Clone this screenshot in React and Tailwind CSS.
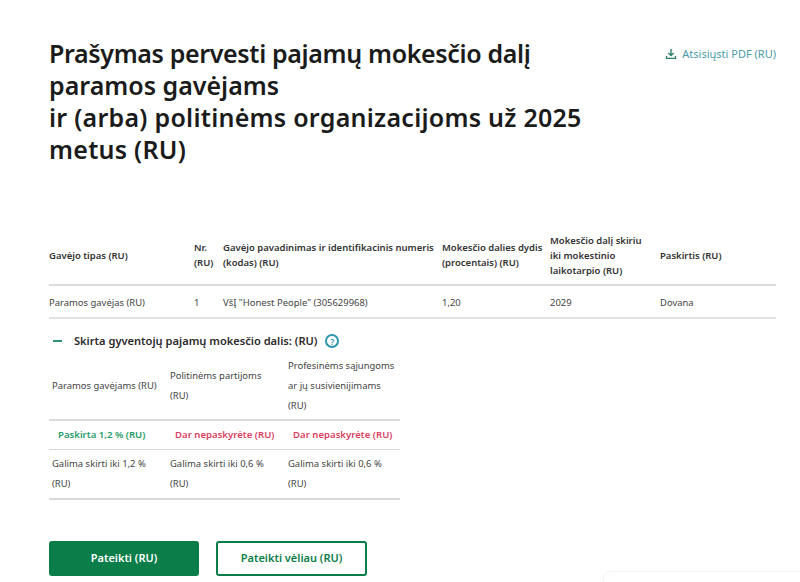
import React from "react";

const head = "text-left align-middle font-semibold text-[9.5px] leading-[15px] text-[#333] p-0 pb-[3px]";
const cell = "text-left align-middle font-normal text-[9.45px] text-[#444] p-0 pt-[3px]";
const sub = "text-left align-middle font-normal text-[9.45px] leading-[20px] text-[#444] p-0 pl-[3px]";

function DownloadIcon() {
  return (
    <svg width="12" height="12" viewBox="0 0 12 12" fill="none" stroke="#2f7f6b" strokeWidth="1.4">
      <path d="M6 1v6.2M3.4 4.9 6 7.5l2.6-2.6" />
      <path d="M1.5 8v2.4h9V8" />
    </svg>
  );
}

export default function App() {
  return (
    <div className="w-[800px] h-[582px] overflow-hidden bg-white font-['Noto_Sans','Open_Sans',sans-serif] relative">
      <div className="pl-[49px] pr-[24px] pt-[37px] flex justify-between items-start">
        <h1 className="w-[560px] text-[25px] leading-[32px] font-semibold text-[#1b1b1b]">
          <span className="tracking-[-0.35px]">Prašymas pervesti pajamų mokesčio dalį</span>
          <br />
          paramos gavėjams
          <br />
          <span className="tracking-[0.26px]">ir (arba) politinėms organizacijoms už 2025 metus (RU)</span>
        </h1>
        <a className="mt-[10px] flex items-center gap-[5px] text-[11px] leading-[14px] text-[#4b9aa8]">
          <DownloadIcon />
          Atsisiųsti PDF (RU)
        </a>
      </div>

      <div className="pl-[49px] pr-[24px] mt-[64px]">
        <table className="w-[727px] table-fixed border-collapse">
          <colgroup>
            <col className="w-[145px]" />
            <col className="w-[29px]" />
            <col className="w-[219px]" />
            <col className="w-[108px]" />
            <col className="w-[110px]" />
            <col className="w-[116px]" />
          </colgroup>
          <thead>
            <tr className="h-[56px] border-b-2 border-[#dcdcdc]">
              <th className={head}>Gavėjo tipas (RU)</th>
              <th className={head}>Nr.<br />(RU)</th>
              <th className={head}>Gavėjo pavadinimas ir identifikacinis numeris<br />(kodas) (RU)</th>
              <th className={head}>Mokesčio dalies dydis<br />(procentais) (RU)</th>
              <th className={head}>Mokesčio dalį skiriu<br />iki mokestinio<br />laikotarpio (RU)</th>
              <th className={head}>Paskirtis (RU)</th>
            </tr>
          </thead>
          <tbody>
            <tr className="h-[33px] border-b-2 border-[#e2e2e2]">
              <td className={cell}>Paramos gavėjas (RU)</td>
              <td className={cell}>1</td>
              <td className={cell}>VšĮ "Honest People" (305629968)</td>
              <td className={cell}>1,20</td>
              <td className={cell}>2029</td>
              <td className={cell}>Dovana</td>
            </tr>
          </tbody>
        </table>

        <div className="flex items-center h-[16px] mt-[14px] pl-[4px]">
          <span className="w-[9px] h-[2px] bg-[#2f8f78]" />
          <span className="ml-[12px] text-[11.1px] font-semibold text-[#2b2b2b]">
            Skirta gyventojų pajamų mokesčio dalis: (RU)
          </span>
          <span className="ml-[8px] w-[14px] h-[14px] rounded-full border-2 border-[#2f95b0] text-[#2f95b0] text-[9px] leading-none font-semibold flex items-center justify-center">
            ?
          </span>
        </div>

        <table className="w-[351px] table-fixed border-collapse mt-[4px]">
          <colgroup>
            <col className="w-[118px]" />
            <col className="w-[118px]" />
            <col className="w-[115px]" />
          </colgroup>
          <tbody>
            <tr className="h-[67px] border-b-2 border-[#d9d9d9]">
              <td className={sub}>Paramos gavėjams (RU)</td>
              <td className={sub}>Politinėms partijoms<br />(RU)</td>
              <td className={sub}>Profesinėms sąjungoms<br />ar jų susivienijimams<br />(RU)</td>
            </tr>
            <tr className="h-[29px] border-b border-[#d9d9d9]">
              <td className="p-0 pl-[9px] text-[9.6px] font-semibold text-[#1f9a68]">Paskirta 1,2 % (RU)</td>
              <td className="p-0 pl-[8px] text-[9.6px] font-semibold text-[#d9425f]">Dar nepaskyrėte (RU)</td>
              <td className="p-0 pl-[8px] text-[9.6px] font-semibold text-[#d9425f]">Dar nepaskyrėte (RU)</td>
            </tr>
            <tr className="h-[50px] border-b-2 border-[#d9d9d9]">
              <td className={sub}>Galima skirti iki 1,2 %<br />(RU)</td>
              <td className={sub}>Galima skirti iki 0,6 %<br />(RU)</td>
              <td className={sub}>Galima skirti iki 0,6 %<br />(RU)</td>
            </tr>
          </tbody>
        </table>

        <div className="flex gap-[17px] mt-[41px]">
          <button className="w-[150px] h-[35px] rounded-[3px] bg-[#0a7d48] text-white text-[11px] font-semibold">
            Pateikti (RU)
          </button>
          <button className="w-[151px] h-[35px] rounded-[3px] border-2 border-[#0a7d48] bg-white text-[#0a7d48] text-[11px] font-semibold">
            Pateikti vėliau (RU)
          </button>
        </div>
      </div>

      <div className="absolute left-[603px] top-[571px] w-[210px] h-[30px] rounded-[8px] border border-[#f3f3f3]" />
    </div>
  );
}
